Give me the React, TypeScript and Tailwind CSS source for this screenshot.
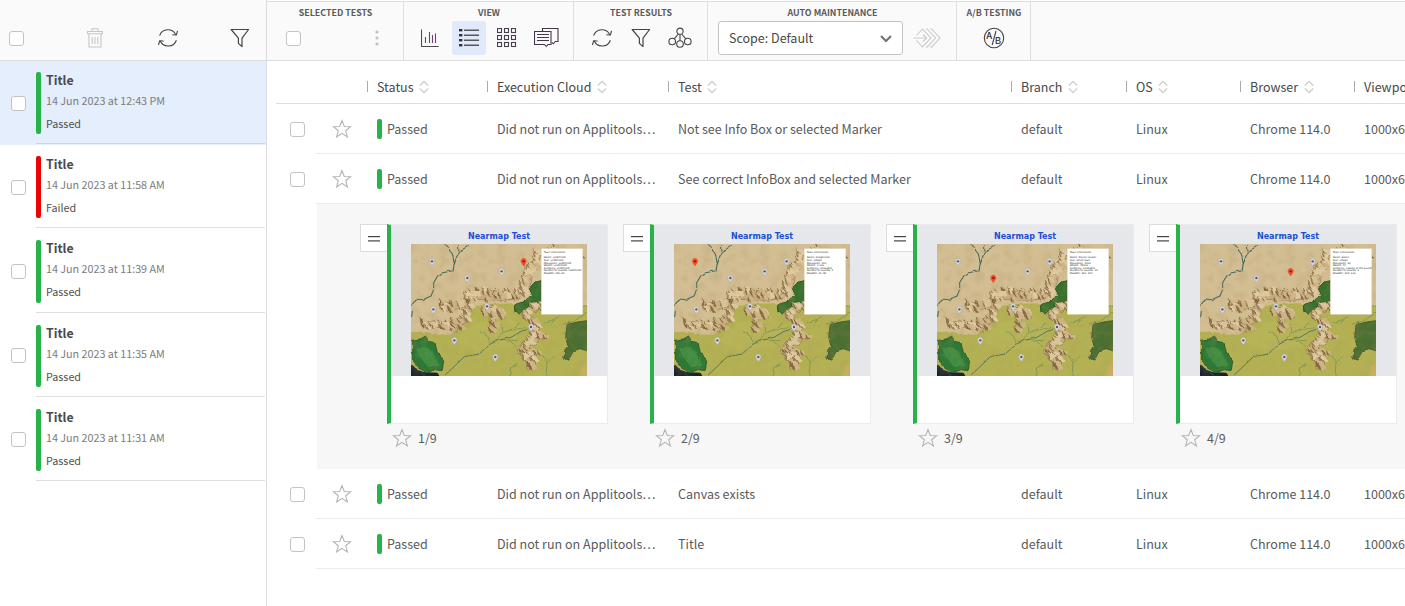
import React from "react";

const FONT = "font-['Noto_Sans_CJK_SC','Noto_Sans',sans-serif]";

/* ---------- icons ---------- */

const Refresh = () => (
  <svg width="22" height="22" viewBox="0 0 22 22" fill="none" stroke="#444" strokeWidth="1.1">
    <path d="M2.6 8.6a8.8 8.8 0 0 1 16.2-.9M19.4 13.2a8.8 8.8 0 0 1-16.2.9" />
    <path d="M15.4 7.8l4 .2 1.1-4.2M6.6 14l-4-.2-1.1 4.2" />
  </svg>
);

const Funnel = () => (
  <svg width="20" height="20" viewBox="0 0 20 20" fill="none" stroke="#444" strokeWidth="1.2" strokeLinejoin="round">
    <path d="M1.2 1.5h17.4L12 10.2v8.4l-3.6-3.2v-5.2z" />
  </svg>
);

const Trash = () => (
  <svg width="16" height="20" viewBox="0 0 16 20" fill="none" stroke="#c6c6c6" strokeWidth="1.1">
    <path d="M.5 3.5h15v2.200h-15zM5 3.500v-2.800h6v2.800M2 5.700v13.300h12V5.700M5.200 9v7M8 9v7M10.800 9v7" />
  </svg>
);

const Star = () => (
  <svg width="20" height="20" viewBox="0 0 20 20" fill="none" stroke="#b3b3b3" strokeWidth="1.1" strokeLinejoin="miter">
    <path d="M10 1.600l2.300 5.900 6.300.3-4.900 4 1.700 6.100L10 14.400l-5.400 3.500 1.700-6.100-4.900-4 6.300-.3z" />
  </svg>
);

const Sort = () => (
  <svg width="10" height="14" viewBox="0 0 10 14" fill="none" stroke="#d0d0d0" strokeWidth="1.4">
    <path d="M.8 5.500L5 1.500l4.200 4M.8 8.500l4.200 4 4.200-4" />
  </svg>
);

const Chart = () => (
  <svg width="18" height="18" viewBox="0 0 18 18" fill="none" strokeWidth="1.100">
    <path d="M.5.500v17h17" stroke="#4a4a4a" />
    <path d="M4.500 8v6M8.500 3v11M11.500 6v8M14.500 4.500v9.500" stroke="#6d3f6a" />
  </svg>
);

const ListIcon = () => (
  <svg width="20" height="18" viewBox="0 0 20 18" fill="#333">
    {[1, 6, 11, 16].map((y) => (
      <g key={y}>
        <rect x="0" y={y - 1} width="3.400" height="2.400" />
        <rect x="5" y={y - 0.4} width="15" height="1.200" />
      </g>
    ))}
  </svg>
);

const GridIcon = () => (
  <svg width="20" height="20" viewBox="0 0 20 20" fill="none" stroke="#4a3d4e" strokeWidth="1.100">
    {[1, 8, 15].map((y) =>
      [1, 8, 15].map((x) => <rect key={`${x}-${y}`} x={x - 0.5} y={y - 0.5} width="4" height="4" />)
    )}
  </svg>
);

const Batches = () => (
  <svg width="25" height="20" viewBox="0 0 25 20" fill="none" stroke="#43364a" strokeWidth="1.100" className="ml-px shrink-0">
    <path d="M8.500 4V.500h15.500v13h-2.700l-2 2.300-1.500-1.500" />
    <path d="M.500 3.500h16.500v13h-3l-1.700 2-1.800-2H.500zM3 6.500h12M3 9.500h12M3 12.500h12" />
  </svg>
);

const Cluster = () => (
  <svg width="24" height="22" viewBox="0 0 24 22" fill="none" stroke="#444" strokeWidth="1.100">
    <circle cx="12" cy="4.200" r="3.100" />
    <circle cx="4.200" cy="14.500" r="3.300" />
    <circle cx="12" cy="17" r="3.300" />
    <circle cx="19.800" cy="14.500" r="3.300" />
    <path d="M12 7.500V13.700M10.400 7L6.200 11.900M13.600 7l4.200 4.900" />
  </svg>
);

const AutoArrow = () => (
  <svg width="28" height="20" viewBox="0 0 28 20" fill="none" stroke="#cbcbcb" strokeWidth="1.100">
    <path d="M.5 10h13M10 6.500l3.600 3.500L10 13.500" />
    <path d="M3.500 7.500L9.500 1l8.500 9-8.500 9-6-6.500M13 1.200L14 .8l8.500 9.200L14 19.200l-1-.6M17.500 1.200l1-.4L27 10l-8.500 9.200-1-.6" />
  </svg>
);

const ABIcon = () => (
  <svg width="22" height="22" viewBox="0 0 22 22" fill="none" stroke="#444" strokeWidth="1.100">
    <circle cx="11" cy="11" r="9.700" />
    <path d="M13 4L9.200 18" />
    <text x="3.200" y="12.400" fontSize="9.500" fill="#333" stroke="none" className="font-['Noto_Sans_CJK_SC'] font-medium">A</text>
    <text x="11.800" y="16.600" fontSize="9.500" fill="#333" stroke="none" className="font-['Noto_Sans_CJK_SC'] font-medium">B</text>
  </svg>
);

const Checkbox = () => <div className="size-[15px] shrink-0 rounded-[3px] border border-[#c3c3c3] bg-white" />;

/* ---------- map artwork ---------- */

type Pt = [number, number];

const RIDGES: { pts: Pt[]; w: number }[] = [
  { pts: [[345, 100], [350, 70], [372, 60], [383, 25]], w: 20 },
  { pts: [[420, 18], [440, 14]], w: 10 },
  { pts: [[85, 182], [125, 188], [155, 180], [172, 165]], w: 24 },
  { pts: [[160, 160], [195, 152], [235, 155], [280, 155], [320, 152], [340, 135], [352, 95]], w: 32 },
  { pts: [[180, 168], [172, 195], [165, 220], [140, 240], [122, 262]], w: 24 },
  { pts: [[34, 238], [65, 243], [100, 242], [145, 236]], w: 20 },
  { pts: [[215, 205], [235, 195], [246, 225], [244, 262]], w: 14 },
  { pts: [[240, 195], [268, 200], [278, 225]], w: 14 },
  { pts: [[388, 185], [340, 207], [362, 232], [372, 258]], w: 20 },
  { pts: [[372, 255], [375, 285], [345, 300], [330, 320], [352, 335], [362, 375]], w: 26 },
  { pts: [[370, 275], [408, 278]], w: 13 },
  { pts: [[355, 320], [385, 325]], w: 12 },
];

const ridgePoints = (pts: Pt[]) => pts.map((p) => p.join(",")).join(" ");

function buildPeaks() {
  let seed = 91;
  const rnd = () => {
    seed = (seed * 16807) % 2147483647;
    return seed / 2147483647;
  };
  const peaks: { y: number; light: string; dark: string; line: string; tone: number }[] = [];
  for (const { pts, w } of RIDGES) {
    for (let i = 0; i < pts.length - 1; i++) {
      const [ax, ay] = pts[i];
      const [bx, by] = pts[i + 1];
      const n = Math.max(2, Math.round(Math.hypot(bx - ax, by - ay) / 6.5));
      for (let k = 0; k < n; k++) {
        const x = ax + ((bx - ax) * k) / n + (rnd() - 0.5) * w * 0.95;
        const y = ay + ((by - ay) * k) / n + (rnd() - 0.5) * w * 0.95;
        const s = 7 + rnd() * 6;
        const lean = -3 - rnd() * 7;
        const foot = 1 + rnd() * 7;
        const top = `${x + lean},${y - s}`;
        const mid = `${x},${y - 1}`;
        const bottom = `${x + foot},${y + s * 0.9}`;
        peaks.push({
          y,
          light: `${top} ${x + s},${y - s * 0.7} ${x + s * 1.7},${y + s * 0.4} ${bottom} ${mid}`,
          dark: `${top} ${mid} ${bottom} ${x - s * 0.4},${y + s * 0.5}`,
          line: `${top} ${mid} ${bottom}`,
          tone: rnd(),
        });
      }
    }
  }
  return peaks.sort((a, b) => a.y - b.y);
}

const PEAKS = buildPeaks();

const PINS: Pt[] = [[63, 55], [169, 105], [272, 85], [338, 55], [67, 199], [228, 190], [360, 252], [130, 292], [253, 342]];

function TownMap({ id, active, info }: { id: string; active: number; info: string[] }) {
  return (
    <svg width="176" height="132" viewBox="0 0 528 396" className="block">
      <defs>
        <filter id={`${id}-grain`} x="0" y="0" width="100%" height="100%">
          <feTurbulence type="fractalNoise" baseFrequency="0.035" numOctaves="4" seed="4" />
          <feColorMatrix values="0 0 0 0 0.4  0 0 0 0 0.32  0 0 0 0 0.12  1.7 0 0 0 -0.75" />
        </filter>
        <filter id={`${id}-rough`} x="-5%" y="-5%" width="110%" height="110%">
          <feTurbulence type="fractalNoise" baseFrequency="0.05" numOctaves="2" seed="7" result="n" />
          <feDisplacementMap in="SourceGraphic" in2="n" scale="9" xChannelSelector="R" yChannelSelector="G" />
        </filter>
        <filter id={`${id}-crag`} x="-5%" y="-5%" width="110%" height="110%">
          <feTurbulence type="fractalNoise" baseFrequency="0.05" numOctaves="2" seed="12" result="n" />
          <feDisplacementMap in="SourceGraphic" in2="n" scale="11" xChannelSelector="R" yChannelSelector="G" />
        </filter>
      </defs>
      <rect width="528" height="396" fill="#d3bd93" />
      <g filter={`url(#${id}-rough)`}>
        <path d="M-5 264L40 263 90 272 115 272 135 255 158 235 180 190 220 180 312 178 320 208 350 205 400 182 460 188 495 183 535 184V402H-5z" fill="#b3b153" />
        <path d="M130 290L190 240 290 215 330 250 300 310 200 320z" fill="#c0bc66" opacity=".3" />
        <path d="M0 362L14 376 38 384 80 386 88 402H-5z" fill="#18212e" />
        <path d="M5 288L28 285 44 276 50 292 72 296 78 322 98 352 93 380 72 377 48 386 22 372 5 352z" fill="#2f7835" stroke="#35572f" strokeWidth="3" />
        <path d="M15 315L48 310 65 325 85 362 52 370 35 350z" fill="#4d9a4b" opacity=".6" />
        <path d="M310 182L342 172 362 148 354 133 372 114 396 108V172L360 174 350 202 325 210 312 202z" fill="#38702d" stroke="#2b4f27" strokeWidth="3" />
        <path d="M468 242L500 234 532 230V322L508 314 488 320 474 345 458 346 462 316 472 310 464 280z" fill="#4c6e33" stroke="#46592f" strokeWidth="3" />
        <path d="M532 350L518 368 510 380 502 400H532z" fill="#c9ae5e" />
      </g>
      <g filter={`url(#${id}-rough)`} fill="none" stroke="#44685d" strokeLinecap="round" strokeLinejoin="round">
        <path d="M102 2L110 12 124 30 130 60 126 80 95 86 80 96 68 116 68 136 60 156 35 167 15 165 0 187M172 5L150 20 138 36 130 60M144 22L142 5M2 218L4 202M488 18L503 28 520 42" strokeWidth="3.200" />
        <path d="M97 398L125 372 160 338 205 330 232 303 262 289 300 280 330 262 372 250" strokeWidth="2.800" stroke="#4f7158" />
        <path d="M234 300L232 280 218 268 208 264M255 290L272 268 305 255 325 238M275 262L272 244M285 288L318 290M298 292L316 308M300 258L345 250M400 236L430 226 460 208 528 186M428 226L422 244M456 240L490 232 526 204M298 396V372L318 358M405 396L408 355 396 335M408 358L428 338" strokeWidth="2" stroke="#6d8a50" />
      </g>
      <g filter={`url(#${id}-crag)`}>
        <g fill="none" strokeLinejoin="round" stroke="#8b7049">
          {RIDGES.map((r, i) => <polyline key={i} points={ridgePoints(r.pts)} strokeWidth={r.w * 0.8 + 3} />)}
        </g>
        <g fill="none" strokeLinejoin="round" stroke="#c5ab7c">
          {RIDGES.map((r, i) => <polyline key={i} points={ridgePoints(r.pts)} strokeWidth={r.w * 0.8} />)}
        </g>
        {PEAKS.map((p, i) => (
          <g key={i}>
            <polygon points={p.light} fill={p.tone > 0.5 ? "#dfc9a0" : "#cfb587"} />
            <polygon points={p.dark} fill={p.tone > 0.5 ? "#a2855a" : "#866b44"} />
            <polyline points={p.line} fill="none" stroke="#6a5030" strokeWidth="1.500" />
          </g>
        ))}
      </g>
      <rect width="528" height="396" filter={`url(#${id}-grain)`} opacity=".35" />
      {PINS.map(([x, y], i) => (
        <g key={i} transform={`translate(${x} ${y})`}>
          <path d="M0 11L-6.500 1.500A8 8.500 0 1 1 6.500 1.500z" fill={i === active ? "#ff4a2b" : "#d9d9df"} stroke={i === active ? "#e04a30" : "#a7a49e"} strokeWidth="1.500" />
          <circle cy="-3" r="3.600" fill={i === active ? "#8e1c12" : "#55555f"} />
        </g>
      ))}
      <rect x="391" y="14" width="124" height="197" fill="#fff" stroke="#e3dcc9" strokeWidth="1" />
      <g className="font-['DejaVu_Sans']" fill="#222" fontSize="7.600">
        <text x="398" y="27">Town information</text>
        {info.map((line, i) => (
          <text key={i} x="398" y={43 + i * 7.8}>{line}</text>
        ))}
      </g>
    </svg>
  );
}

/* ---------- sidebar ---------- */

const RUNS = [
  { date: "14 Jun 2023 at 12:43 PM", status: "Passed" },
  { date: "14 Jun 2023 at 11:58 AM", status: "Failed" },
  { date: "14 Jun 2023 at 11:39 AM", status: "Passed" },
  { date: "14 Jun 2023 at 11:35 AM", status: "Passed" },
  { date: "14 Jun 2023 at 11:31 AM", status: "Passed" },
];

function Sidebar() {
  return (
    <aside className="flex w-[267px] shrink-0 flex-col border-r border-[#dcdcdc]">
      <div className="flex h-[61px] shrink-0 items-end border-b border-[#dedede] bg-[#fafafa] pb-[11px] pl-[9px]">
        <div className="flex h-[22px] w-[78px] items-center"><Checkbox /></div>
        <div className="flex h-[22px] w-[70px] items-center"><Trash /></div>
        <div className="flex h-[22px] w-[73px] items-center"><Refresh /></div>
        <div className="flex h-[22px] items-center"><Funnel /></div>
      </div>
      {RUNS.map((run, i) => (
        <div key={i} className={`flex h-[84.22px] items-start ${i === 0 ? "bg-[#e4eefd]" : ""}`}>
          <div className="w-9 pl-[11px] pt-[34.55px]"><Checkbox /></div>
          <div className={`mr-px flex h-[83.1px] flex-1 border-b pt-[11px] ${i === 0 ? "border-[#c9d5e6]" : "border-[#e0e0e0]"}`}>
            <div className={`h-[62.1px] w-[5px] rounded-[2px] ${run.status === "Failed" ? "bg-[#ea0303]" : "bg-[#27b24a]"}`} />
            <div className="flex flex-col whitespace-nowrap pl-[5px]">
              <div className="h-[19px] text-[12.3px] font-bold leading-[16px] text-[#4a4a4a]">Title</div>
              <div className="h-[24px] text-[10.75px] leading-[19px] text-[#7c7c7c]">{run.date}</div>
              <div className="text-[10.75px] leading-[18px] text-[#505050]">{run.status}</div>
            </div>
          </div>
        </div>
      ))}
    </aside>
  );
}

/* ---------- toolbar ---------- */

function Group({ label, width, children }: { label: string; width: string; children: React.ReactNode }) {
  return (
    <div className={`flex shrink-0 flex-col border-r border-[#dedede] ${width}`}>
      <div className="h-[19px] whitespace-nowrap pl-px text-center text-[8.85px] font-bold leading-[21px] text-[#5a5a5a]">{label}</div>
      <div className="flex h-[34px] items-center">{children}</div>
    </div>
  );
}

const Slot = ({ on, children, w = "w-[34px]" }: { on?: boolean; w?: string; children: React.ReactNode }) => (
  <div className={`flex h-[34px] shrink-0 items-center justify-center rounded-[3px] ${w} ${on ? "bg-[#e1eafa]" : ""}`}>{children}</div>
);

function Toolbar() {
  return (
    <div className="mt-px flex h-[60px] border-b border-t border-[#dedede] bg-[#fafafa]">
      <Group label="SELECTED TESTS" width="w-[137px]">
        <div className="flex w-full items-center justify-between pl-[19px] pr-6">
          <Checkbox />
          <svg width="4" height="16" viewBox="0 0 4 16" fill="#c2c2c2">
            <circle cx="2" cy="2" r="1.600" /><circle cx="2" cy="8" r="1.600" /><circle cx="2" cy="14" r="1.600" />
          </svg>
        </div>
      </Group>
      <Group label="VIEW" width="w-[170px]">
        <div className="flex pl-[9px]">
          <Slot><Chart /></Slot>
          <div className="flex gap-1 pl-[5px]">
            <Slot on><ListIcon /></Slot>
            <Slot><GridIcon /></Slot>
            <Slot w="w-[36px]"><Batches /></Slot>
          </div>
        </div>
      </Group>
      <Group label="TEST RESULTS" width="w-[134px]">
        <div className="flex gap-[5px] pl-[11px]">
          <Slot><Refresh /></Slot>
          <Slot><Funnel /></Slot>
          <Slot><Cluster /></Slot>
        </div>
      </Group>
      <Group label="AUTO MAINTENANCE" width="w-[249px]">
        <div className="ml-[10px] flex h-[34px] w-[185px] items-center justify-between rounded-[3px] border border-[#c3c3c3] bg-white pl-[10px] pr-[10px] text-[12.5px] text-[#484848]">
          <span className="leading-[18px]">Scope: Default</span>
          <svg width="12" height="8" viewBox="0 0 12 8" fill="none" stroke="#707070" strokeWidth="2" className="mt-px"><path d="M1 1l5 5 5-5" /></svg>
        </div>
        <div className="pl-[10px]"><AutoArrow /></div>
      </Group>
      <Group label="A/B TESTING" width="w-[74px]">
        <Slot w="w-full"><ABIcon /></Slot>
      </Group>
    </div>
  );
}

/* ---------- results table ---------- */

const COLUMNS = [
  { name: "Status", w: "w-[120px]" },
  { name: "Execution Cloud", w: "w-[181px]" },
  { name: "Test", w: "w-[343px]" },
  { name: "Branch", w: "w-[115px]" },
  { name: "OS", w: "w-[114px]" },
  { name: "Browser", w: "w-[114px]" },
  { name: "Viewport", w: "w-[114px]" },
];

function HeaderRow() {
  return (
    <div className="ml-[9px] flex h-[43px] border-b border-[#dedede] pl-[91px] pt-[10px]">
      {COLUMNS.map((c) => (
        <div key={c.name} className={`flex h-[31px] shrink-0 items-center text-[12.5px] text-[#484848] ${c.w}`}>
          <div className="h-[11px] w-px bg-[#aaa]" />
          <span className="pl-[9px] pr-[5.500px] leading-[18px]">{c.name}</span>
          <Sort />
        </div>
      ))}
    </div>
  );
}

function Row({ test }: { test: string }) {
  const cells = ["Did not run on Applitools…", test, "default", "Linux", "Chrome 114.0", "1000x600"];
  return (
    <div className="flex h-[50px] text-[12.53px] leading-[18px] text-[#5a5a5a]">
      <div className="flex w-[49px] shrink-0 items-center pl-[23px]"><Checkbox /></div>
      <div className="flex flex-1 items-center border-b border-[#ebebeb]">
        <div className="flex w-[51px] shrink-0 pl-4"><Star /></div>
        <div className="flex w-[120px] shrink-0 items-center pl-[10px]">
          <div className="mr-[5px] h-5 w-[5px] rounded-[2px] bg-[#27b24a]" />
          <span className="pt-px">Passed</span>
        </div>
        {cells.map((text, i) => (
          <div key={i} className={`shrink-0 whitespace-nowrap pl-[10px] pt-px ${COLUMNS[i + 1].w}`}>{text}</div>
        ))}
      </div>
    </div>
  );
}

const STEPS = [
  { active: 3, info: ["Name: undefined", "Size: undefined", "Population: undefined", "Wealth: undefined", "Authority: undefined", "Number of Guards: undefined", "Possible: folk OK"] },
  { active: 0, info: ["Name: Dragontale", "Size: village", "Population: 200", "Wealth: 1 000", "Authority: constable", "Number of Guards: 5", "Possible: 20, 80"] },
  { active: 1, info: ["Name: Raven Cluster", "Size: small town", "Population: 1300", "Wealth: 78000", "Authority: constable", "Number of Guards: 13", "Possible: 360, 367"] },
  { active: 2, info: ["Name: Eaten", "Size: village", "Population: 40", "Wealth: 57", "Authority: captain of the guard", "Number of Guards: 0", "Possible: 305, 110"] },
];

function Steps() {
  return (
    <div className="ml-[50px] flex h-[265px] gap-[15px] bg-[#f7f7f7] pl-[43px] pt-5">
      {STEPS.map((step, i) => (
        <div key={i} className="flex shrink-0 items-start">
          <div className="flex h-7 w-[27px] items-center justify-center border border-r-0 border-[#dcdcdc] bg-white">
            <svg width="12" height="6" viewBox="0 0 12 6" fill="#444" className="mt-px"><rect width="12" height="1.200" y="0" /><rect width="12" height="1.200" y="4.300" /></svg>
          </div>
          <div>
            <div className="h-[200px] w-[221px] border border-l-4 border-[#ebebeb] border-l-[#27b24a] bg-white">
              <div className="flex h-[151px] flex-col items-center bg-[#e5e7eb]">
                <div className="h-[19px] whitespace-nowrap font-['DejaVu_Sans'] text-[8px] font-bold leading-[24px] text-[#1d4ed8]">Nearmap Test</div>
                <TownMap id={`map${i}`} active={step.active} info={step.info} />
              </div>
            </div>
            <div className="flex items-center pl-[5px] pt-[4px] text-[12.53px] leading-[20px] text-[#5c5c5c]">
              <Star />
              <span className="pl-[6px]">{i + 1}/9</span>
            </div>
          </div>
        </div>
      ))}
    </div>
  );
}

export default function App() {
  return (
    <div className={`flex h-[606px] w-[1405px] overflow-hidden bg-white ${FONT}`}>
      <Sidebar />
      <main className="min-w-0 flex-1 overflow-hidden">
        <Toolbar />
        <HeaderRow />
        <Row test="Not see Info Box or selected Marker" />
        <Row test="See correct InfoBox and selected Marker" />
        <Steps />
        <Row test="Canvas exists" />
        <Row test="Title" />
      </main>
    </div>
  );
}
